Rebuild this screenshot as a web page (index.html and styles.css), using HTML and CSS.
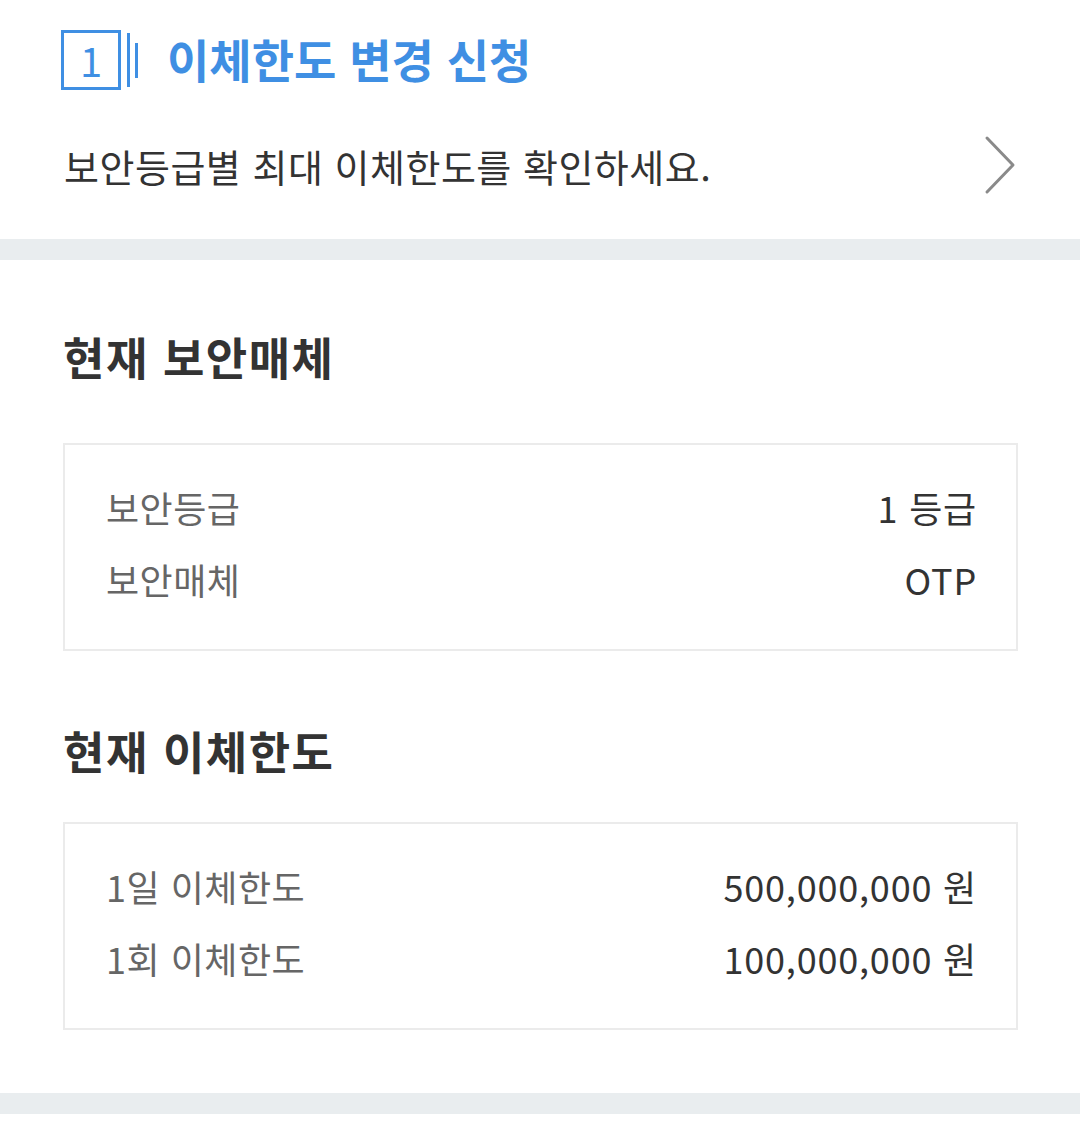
FILE: index.html
```html
<!DOCTYPE html>
<html lang="ko">
<head>
    <meta charset="UTF-8">
    <meta name="viewport" content="width=device-width, initial-scale=1.0">
    <title>이체한도 변경 신청</title>
    <link rel="stylesheet" href="styles.css">
</head>
<body>

<div class="page">
    <div class="top">
        <div class="step-title">
            <div class="step-num">1</div>
            <div class="step-lines">
                <span class="line-long"></span>
                <span class="line-short"></span>
            </div>
            <h1>이체한도 변경 신청</h1>
        </div>

        <a class="info-link" href="#">
            <span>보안등급별 최대 이체한도를 확인하세요.</span>
            <svg class="chevron" width="32" height="60" viewBox="0 0 32 60">
                <polyline points="3,3 29,30 3,57" fill="none" stroke="#8a8a8a" stroke-width="3" stroke-linecap="round" stroke-linejoin="round"/>
            </svg>
        </a>
    </div>

    <div class="divider"></div>

    <div class="section">
        <h2 class="section-title first">현재 보안매체</h2>
        <div class="info-box">
            <div class="info-row">
                <span class="label">보안등급</span>
                <span class="value">1 등급</span>
            </div>
            <div class="info-row">
                <span class="label">보안매체</span>
                <span class="value">OTP</span>
            </div>
        </div>

        <h2 class="section-title second">현재 이체한도</h2>
        <div class="info-box">
            <div class="info-row">
                <span class="label">1일 이체한도</span>
                <span class="value">500,000,000 원</span>
            </div>
            <div class="info-row">
                <span class="label">1회 이체한도</span>
                <span class="value">100,000,000 원</span>
            </div>
        </div>
    </div>

    <div class="divider"></div>
</div>

</body>
</html>
```

FILE: styles.css
```css
body {
    margin: 0;
    padding: 0;
    background-color: #fff;
    font-family: "Noto Sans CJK KR", "Noto Sans", sans-serif;
    color: #333;
}
.page {
    width: 1080px;
}
.top {
    padding: 30px 64px 0 61px;
}
.step-title {
    display: flex;
    align-items: center;
    height: 60px;
}
.step-num {
    width: 54px;
    height: 54px;
    border: 3px solid #3f8fe3;
    color: #3f8fe3;
    font-size: 40px;
    line-height: 54px;
    text-align: center;
    font-weight: 400;
}
.step-lines {
    display: flex;
    align-items: center;
    gap: 5px;
    margin-left: 6px;
    height: 60px;
}
.line-long {
    width: 3px;
    height: 54px;
    background-color: #3f8fe3;
}
.line-short {
    width: 3px;
    height: 35px;
    background-color: #3f8fe3;
}
.step-title h1 {
    margin: -4px 0 0 29px;
    font-size: 46px;
    font-weight: 700;
    color: #3f8fe3;
    line-height: 60px;
}
.info-link {
    display: flex;
    justify-content: space-between;
    align-items: center;
    margin-top: 45px;
    margin-left: 3px;
    height: 60px;
    color: #333;
    text-decoration: none;
    font-size: 38px;
    letter-spacing: 0.5px;
}
.divider {
    height: 21px;
    background-color: #e9edef;
    margin-top: 44px;
}
.section {
    padding: 0 62px 0 63px;
}
.section-title {
    margin: 0;
    font-size: 45px;
    font-weight: 700;
    line-height: 60px;
    color: #333;
    letter-spacing: 1.5px;
}
.section-title.first {
    margin-top: 67px;
}
.section-title.second {
    margin-top: 70px;
}
.info-box {
    border: 2px solid #ebebeb;
    padding: 26px 39px 34px 41px;
    margin-top: 56px;
}
.section-title.second + .info-box {
    margin-top: 41px;
}
.info-row {
    display: flex;
    justify-content: space-between;
    align-items: center;
    height: 72px;
    font-size: 36px;
}
.label {
    color: #666;
    letter-spacing: 0.5px;
}
.value {
    color: #333;
    letter-spacing: 0.8px;
}
.section + .divider {
    margin-top: 63px;
}
```
